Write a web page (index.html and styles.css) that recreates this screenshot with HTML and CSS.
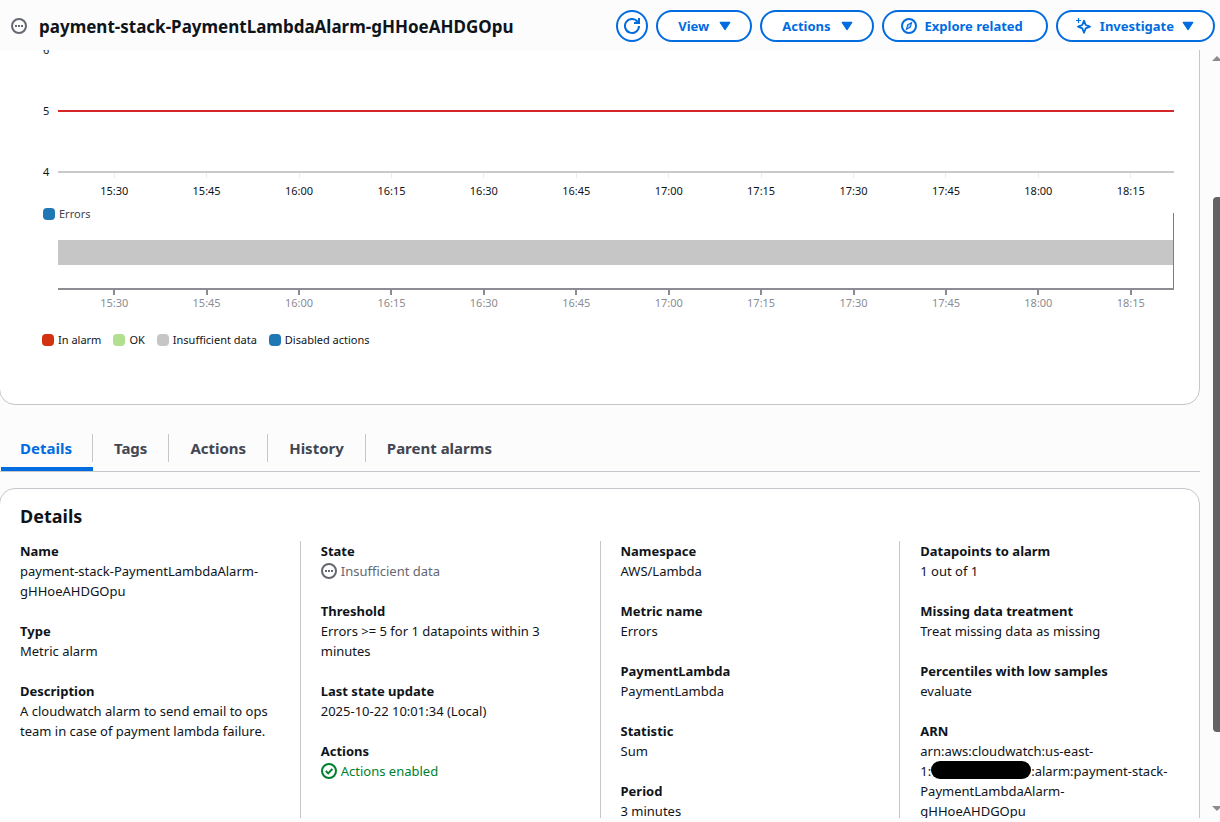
FILE: index.html
```html
<!DOCTYPE html>
<html lang="en">
<head>
<meta charset="utf-8">
<meta name="viewport" content="width=device-width, initial-scale=1">
<title>payment-stack-PaymentLambdaAlarm-gHHoeAHDGOpu</title>
<link rel="stylesheet" href="styles.css">
</head>
<body>
<header class="topbar">
  <svg class="icon icon-muted" viewBox="0 0 16 16" role="img" aria-label="Insufficient data"><circle cx="8" cy="8" r="7"/><path d="M4 8h2M7 8h2M10 8h2"/></svg>
  <h1 class="title">payment-stack-PaymentLambdaAlarm-gHHoeAHDGOpu</h1>
  <div class="toolbar">
    <button class="btn btn-round" type="button" aria-label="Refresh"><svg class="icon" viewBox="0 0 16 16"><path d="M15 8a7 7 0 1 1-1.600-4.500L15 5"/><path d="M15 0v5h-5"/></svg></button>
    <button class="btn" type="button">View<svg class="caret" viewBox="0 0 10 8"><path d="M1 1h8L5 7z"/></svg></button>
    <button class="btn" type="button">Actions<svg class="caret" viewBox="0 0 10 8"><path d="M1 1h8L5 7z"/></svg></button>
    <button class="btn btn-explore" type="button"><svg class="icon" viewBox="0 0 16 16"><circle cx="8" cy="8" r="7"/><path class="thin" d="M10.500 4.800 9.300 9 5.500 11.200 6.700 7z"/><path class="thin" d="M7.600 8.400l.8-.8"/></svg>Explore related</button>
    <button class="btn btn-investigate" type="button"><svg class="icon" viewBox="0 0 16 16"><path class="star" d="M8 2.600 9.700 7 14 8.700 9.700 10.400 8 14.800 6.300 10.400 2 8.700 6.300 7z"/><path class="thin" d="M2.500 0v5M0 2.500h5"/></svg>Investigate<svg class="caret" viewBox="0 0 10 8"><path d="M1 1h8L5 7z"/></svg></button>
  </div>
</header>

<div class="viewport">
  <main class="content">
    <section class="card chart-card" aria-label="Graph">
      <div class="chart">
        <div class="y-axis"><span>6</span><span>5</span><span>4</span></div>
        <div class="plot"></div>
      </div>
      <ol class="ticks ticks-metric"><li>15:30</li><li>15:45</li><li>16:00</li><li>16:15</li><li>16:30</li><li>16:45</li><li>17:00</li><li>17:15</li><li>17:30</li><li>17:45</li><li>18:00</li><li>18:15</li></ol>
      <div class="state-head"><span class="legend-item soft"><i class="swatch blue"></i>Errors</span></div>
      <div class="state-plot"><div class="state-bar"></div></div>
      <ol class="ticks ticks-state"><li>15:30</li><li>15:45</li><li>16:00</li><li>16:15</li><li>16:30</li><li>16:45</li><li>17:00</li><li>17:15</li><li>17:30</li><li>17:45</li><li>18:00</li><li>18:15</li></ol>
      <div class="legend">
        <span class="legend-item"><i class="swatch red"></i>In alarm</span>
        <span class="legend-item"><i class="swatch green"></i>OK</span>
        <span class="legend-item"><i class="swatch grey"></i>Insufficient data</span>
        <span class="legend-item"><i class="swatch blue"></i>Disabled actions</span>
      </div>
    </section>

    <div class="tabs" role="tablist">
      <button class="tab active" role="tab" aria-selected="true" type="button"><span>Details</span></button>
      <button class="tab" role="tab" aria-selected="false" type="button"><span>Tags</span></button>
      <button class="tab" role="tab" aria-selected="false" type="button"><span>Actions</span></button>
      <button class="tab" role="tab" aria-selected="false" type="button"><span>History</span></button>
      <button class="tab" role="tab" aria-selected="false" type="button"><span>Parent alarms</span></button>
    </div>

    <section class="card details-card">
      <h2 class="heading">Details</h2>
      <div class="columns">
        <dl class="column">
          <div><dt>Name</dt><dd>payment-stack-PaymentLambdaAlarm-gHHoeAHDGOpu</dd></div>
          <div><dt>Type</dt><dd>Metric alarm</dd></div>
          <div><dt>Description</dt><dd>A cloudwatch alarm to send email to ops team in case of payment lambda failure.</dd></div>
        </dl>
        <dl class="column">
          <div><dt>State</dt><dd class="status muted"><svg class="icon" viewBox="0 0 16 16"><circle cx="8" cy="8" r="7"/><path d="M4 8h2M7 8h2M10 8h2"/></svg>Insufficient data</dd></div>
          <div><dt>Threshold</dt><dd>Errors &gt;= 5 for 1 datapoints within 3 minutes</dd></div>
          <div><dt>Last state update</dt><dd>2025-10-22 10:01:34 (Local)</dd></div>
          <div><dt>Actions</dt><dd class="status success"><svg class="icon" viewBox="0 0 16 16"><circle cx="8" cy="8" r="7"/><path d="M4.800 8l2.400 2.400 4.200-4.600"/></svg>Actions enabled</dd></div>
        </dl>
        <dl class="column">
          <div><dt>Namespace</dt><dd>AWS/Lambda</dd></div>
          <div><dt>Metric name</dt><dd>Errors</dd></div>
          <div><dt>PaymentLambda</dt><dd>PaymentLambda</dd></div>
          <div><dt>Statistic</dt><dd>Sum</dd></div>
          <div><dt>Period</dt><dd>3 minutes</dd></div>
        </dl>
        <dl class="column">
          <div><dt>Datapoints to alarm</dt><dd>1 out of 1</dd></div>
          <div><dt>Missing data treatment</dt><dd>Treat missing data as missing</dd></div>
          <div><dt>Percentiles with low samples</dt><dd>evaluate</dd></div>
          <div><dt>ARN</dt><dd>arn:aws:cloudwatch:us-east-<br>1:<span class="redacted"></span>:alarm:payment-stack-<br>PaymentLambdaAlarm-<br>gHHoeAHDGOpu</dd></div>
        </dl>
      </div>
    </section>
  </main>
  <div class="scrollbar" aria-hidden="true">
    <svg class="arrow" viewBox="0 0 10 5"><path d="M0 5h10L5 0z"/></svg>
    <div class="track"><div class="thumb"></div></div>
    <svg class="arrow" viewBox="0 0 10 5"><path d="M0 0h10L5 5z"/></svg>
  </div>
</div>
</body>
</html>
```

FILE: styles.css
```css
*, *::before, *::after { box-sizing: border-box; }

body {
  margin: 0;
  height: 100vh;
  padding-bottom: 4px;
  display: flex;
  flex-direction: column;
  overflow: hidden;
  background: #fcfcfd;
  color: #0f141a;
  font: 13px/20px "Noto Sans", "Open Sans", sans-serif;
}

h1, h2, dl, dd, ol { margin: 0; padding: 0; }
button { font: inherit; cursor: pointer; }

/* Icons */
.icon {
  width: 16px;
  height: 16px;
  flex: none;
  fill: none;
  stroke: currentColor;
  stroke-width: 2;
}
.icon .thin { stroke-width: 1.2; }
.icon .star { stroke-width: 1.8; stroke-linejoin: round; }
.icon-muted { color: #656871; }
.caret {
  width: 12px;
  height: 10px;
  fill: currentColor;
  stroke: currentColor;
  stroke-width: 1;
  stroke-linejoin: round;
}

/* Header */
.topbar {
  flex: none;
  height: 50px;
  padding: 2px 5px 0 11px;
  display: flex;
  align-items: center;
  gap: 12px;
}
.title { font-size: 17px; line-height: 25px; font-weight: 700; }
.toolbar { margin-left: auto; display: flex; gap: 8px; }
.btn {
  height: 32px;
  padding: 0 19px 0 20px;
  display: flex;
  align-items: center;
  gap: 10px;
  border: 2px solid #006ce0;
  border-radius: 16px;
  background: #fff;
  color: #006ce0;
  font-weight: 700;
  white-space: nowrap;
}
.btn-round { width: 32px; padding: 0; justify-content: center; }
.btn-explore { gap: 8px; padding: 0 23px 0 17px; }
.btn-investigate { gap: 8px; padding: 0 19px 0 18px; }

/* Scrolling region */
.viewport { flex: 1; min-height: 0; display: flex; overflow: hidden; }
.content { flex: 1; min-width: 0; }
.card {
  margin-left: -1px;
  border: 1px solid #c6c6cd;
  border-radius: 16px;
  background: #fff;
}

/* Chart */
.chart-card {
  margin-top: -11px;
  height: 366px;
  padding: 0 25px 0 42px;
  border-top-left-radius: 0;
  border-top-right-radius: 0;
  font-size: 11px;
}
.chart { display: flex; height: 143px; }
.y-axis {
  width: 16px;
  padding: 0 0 1px 1px;
  display: flex;
  flex-direction: column;
  justify-content: space-between;
}
.plot {
  flex: 1;
  margin: 10px 0;
  border-bottom: 2px solid #c9c9c9;
  background: linear-gradient(#d62728, #d62728) 0 60px / 100% 2px no-repeat;
}
.ticks {
  display: grid;
  grid-template-columns: repeat(12, 1fr);
  margin: 0 -3px 0 26px;
  list-style: none;
  text-align: center;
}
.ticks li::before {
  content: "";
  display: block;
  width: 1px;
  height: 5px;
  margin: 0 auto;
  background: #ececec;
}
.ticks-metric { margin-top: -10px; }
.ticks-metric li { line-height: 26px; }
.state-head { height: 36px; padding-left: 1px; }
.state-plot {
  height: 50px;
  margin-left: 16px;
  border-bottom: 2px solid #8c8c94;
  position: relative;
}
.state-plot::after {
  content: "";
  position: absolute;
  right: 0;
  bottom: 0;
  width: 1px;
  height: 75px;
  background: #7d7d80;
}
.state-bar { height: 25px; background: #c6c6c6; }
.ticks-state { color: #8c8c94; }
.ticks-state li { line-height: 16px; }
.ticks-state li::before { width: 2px; background: #8c8c94; }
.legend { display: flex; gap: 12px; margin-top: 19px; }
.legend-item { display: flex; align-items: center; gap: 4px; }
.soft { color: #424650; }
.swatch { width: 12px; height: 12px; border-radius: 4px; }
.blue { background: #1f77b4; }
.red { background: #d13212; }
.green { background: #b2df8d; }
.grey { background: #c6c6c6; }

/* Tabs */
.tabs {
  display: flex;
  margin: 20px 0 16px;
  padding-left: 1px;
  border-bottom: 1px solid #c6c6cd;
}
.tab {
  padding: 9px 0 5px;
  border: 0;
  border-bottom: 4px solid transparent;
  background: none;
  color: #424650;
  font-size: 15px;
  line-height: 28px;
  font-weight: 700;
}
.tab span { display: block; padding: 0 21px; border-right: 1px solid #c6c6cd; }
.tab:first-child span { padding: 0 20px 0 19px; }
.tab:last-child span { border-right: 0; }
.tab.active { color: #006ce0; border-bottom-color: #006ce0; }

/* Details */
.details-card { padding-bottom: 20px; }
.heading { padding: 15px 20px 13px; font-size: 18px; line-height: 24px; font-weight: 700; }
.columns { display: grid; grid-template-columns: repeat(4, 1fr); }
.column {
  display: flex;
  flex-direction: column;
  gap: 20px;
  padding: 0 20px;
}
.column + .column { border-left: 1px solid #c6c6cd; }
dt { font-weight: 700; }
dd { overflow-wrap: anywhere; }
.status { display: flex; align-items: center; gap: 4px; }
.muted { color: #656871; }
.success { color: #00802f; }
.redacted {
  display: inline-block;
  width: 100px;
  height: 18px;
  border-radius: 9px;
  background: #000;
  vertical-align: top;
}

/* Scrollbar */
.scrollbar {
  flex: none;
  width: 20px;
  padding: 6px 0 7px 12px;
  display: flex;
  flex-direction: column;
  overflow: hidden;
}
.arrow { width: 10px; height: 5px; flex: none; fill: #8b8b8b; }
.track { flex: 1; padding: 136px 0 74px 1px; }
.thumb { height: 100%; border-radius: 4px 0 0 4px; background: #636363; }
```
